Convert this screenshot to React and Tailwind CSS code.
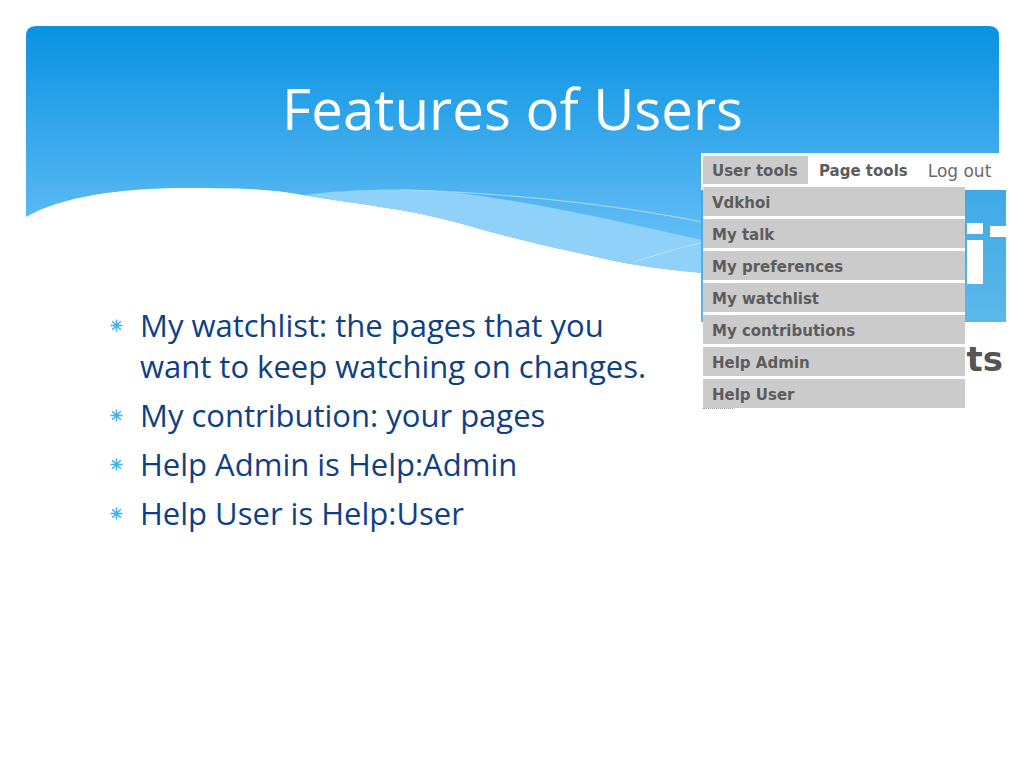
import React from "react";

const bullets = [
  ["My watchlist: the pages that you", "want to keep watching on changes."],
  ["My contribution: your pages"],
  ["Help Admin is Help:Admin"],
  ["Help User is Help:User"],
];

const menuItems = ["Vdkhoi", "My talk", "My preferences", "My watchlist", "My contributions", "Help Admin", "Help User"];

// the wave under the header gradient
const Wave = () => (
  <svg className="absolute left-0 top-0" width="1024" height="330" viewBox="0 0 1024 330" fill="none">
    <defs>
      <linearGradient id="head" x1="0" y1="26" x2="0" y2="300" gradientUnits="userSpaceOnUse">
        <stop offset="0" stopColor="#0892e1" />
        <stop offset="0.7" stopColor="#5ab9f3" />
        <stop offset="1" stopColor="#78c8f7" />
      </linearGradient>
    </defs>
    <path
      d="M26 36 Q26 26 36 26 H989 Q999 26 999 36 V300 H760 L702 273 C670 270 635 266 597 257 C550 247 510 238 459 223 C410 209 355 204 303 195 C265 188 225 188 184 188 C120 188 60 197 26 217 Z"
      fill="url(#head)"
    />
    <path
      d="M303 195 C345 189 420 187 459 193 C540 203 620 222 702 240 V273 C670 270 635 266 597 257 C550 247 510 238 459 223 C410 209 355 204 303 195 Z"
      fill="#8fd1f8"
    />
    <path d="M400 190 C500 192 620 205 702 222" stroke="#a9dcfa" strokeWidth="1" />
    <path d="M634 262 C660 254 680 247 702 243" stroke="#b7e2fb" strokeWidth="1" />
  </svg>
);

const BulletMark = () => (
  <svg className="mt-[14px] shrink-0" width="13" height="13" viewBox="0 0 13 13" stroke="#3bb3ee" strokeWidth="1.5">
    <path d="M6.5 0.5V12.5M0.5 6.5H12.5M2.2 2.2L10.8 10.8M10.8 2.2L2.2 10.8" />
  </svg>
);

// pasted wiki screenshot, sits over the slide
const ToolsShot = () => (
  <div className="absolute left-[701px] top-[153px] w-[305px] h-[255px] flex flex-col font-['DejaVu_Sans',sans-serif] font-bold text-[15px] text-[#5c5c5c] whitespace-nowrap">
    <div className="h-[37px] bg-white flex pl-[2px] pt-[3px]">
      <div className="h-[28px] w-[105px] bg-[#cbcbcb] pl-[9px] leading-[30px]">User tools</div>
      <div className="h-[28px] pl-[11px] leading-[30px]">Page tools</div>
      <div className="h-[28px] pl-[20px] leading-[30px] font-normal text-[17px] text-[#6a6a6a]">Log out</div>
    </div>
    <div className="h-[132px] bg-gradient-to-b from-[#3fa9e6] to-[#5bb8ea] flex gap-[7px] pl-[266px]">
      <div className="flex flex-col gap-[6px] pt-[33px]">
        <div className="w-[16px] h-[11px] bg-white" />
        <div className="w-[16px] h-[44px] bg-white" />
      </div>
      <div className="w-[16px] h-[11px] mt-[36px] bg-white" />
    </div>
    <div className="flex justify-end pr-[3px] pt-[17px] text-[34px] leading-[40px] text-[#555555]">ts</div>
    <div className="absolute left-[2px] top-[34px] w-[262px]">
      <div className="bg-white flex flex-col gap-[3px]">
        {menuItems.map((item) => (
          <div key={item} className="h-[29px] bg-[#cbcbcb] pl-[9px] leading-[32px]">
            {item}
          </div>
        ))}
      </div>
      <div className="w-[30px] border-t border-dotted border-[#999999]" />
    </div>
  </div>
);

export default function App() {
  return (
    <div className="relative w-[1024px] h-[768px] bg-white overflow-hidden font-['Open_Sans',sans-serif]">
      <Wave />
      <h1 className="relative pt-[70px] pl-[282px] text-[56.5px] leading-[78px] font-normal text-white">Features of Users</h1>
      <ul className="relative mt-[157px] ml-[110px] flex flex-col gap-2 text-[31px] leading-[41px] text-[#0f3f85]">
        {bullets.map((lines) => (
          <li key={lines[0]} className="flex gap-[17px]">
            <BulletMark />
            <div>
              {lines.map((line) => (
                <div key={line}>{line}</div>
              ))}
            </div>
          </li>
        ))}
      </ul>
      <ToolsShot />
    </div>
  );
}
